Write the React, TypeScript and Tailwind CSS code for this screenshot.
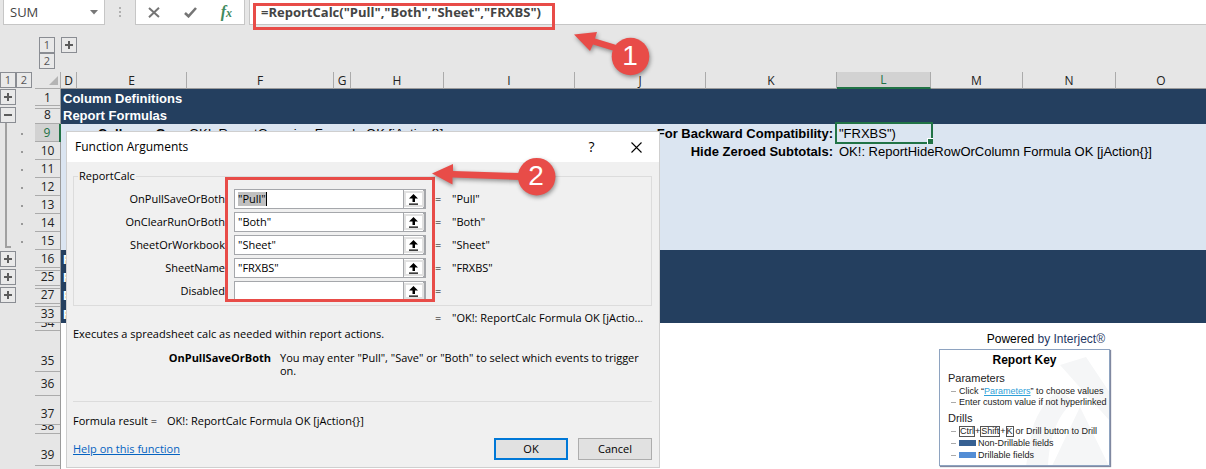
import type { ReactNode } from "react";

const COLUMNS = [
  { id: "D", width: "w-4" },
  { id: "E", width: "w-[110px]" },
  { id: "F", width: "w-[147px]" },
  { id: "G", width: "w-[17px]" },
  { id: "H", width: "w-[93px]" },
  { id: "I", width: "w-[131px]" },
  { id: "J", width: "w-[131px]" },
  { id: "K", width: "w-[131px]" },
  { id: "L", width: "w-[94px]" },
  { id: "M", width: "w-[92px]" },
  { id: "N", width: "w-[93px]" },
  { id: "O", width: "w-[91px]" },
];

type Row = {
  id: string;
  height: string;
  tone: "navy" | "sky" | "white";
  title?: string;
  afterHidden?: boolean;
  align?: string;
  cells?: Record<string, string>;
};

const MIDDLE = "items-center pt-px";
const BOTTOM = "items-end pb-[3px]";
const CLIPPED = "items-end";

const ROWS: Row[] = [
  { id: "1", height: "h-[17px]", tone: "navy", title: "Column Definitions" },
  { id: "8", height: "h-[18px]", tone: "navy", title: "Report Formulas", afterHidden: true },
  {
    id: "9",
    height: "h-[18px]",
    tone: "sky",
    cells: {
      E: "Collapse Grp:",
      F: "OK!: ReportGrouping Formula OK [jAction{}]",
      K: "For Backward Compatibility:",
      L: '"FRXBS")',
    },
  },
  {
    id: "10",
    height: "h-[18px]",
    tone: "sky",
    cells: {
      K: "Hide Zeroed Subtotals:",
      L: "OK!: ReportHideRowOrColumn Formula OK [jAction{}]",
    },
  },
  { id: "11", height: "h-[18px]", tone: "sky" },
  { id: "12", height: "h-[18px]", tone: "sky" },
  { id: "13", height: "h-[18px]", tone: "sky" },
  { id: "14", height: "h-[18px]", tone: "sky" },
  { id: "15", height: "h-[18px]", tone: "sky" },
  { id: "16", height: "h-[18px]", tone: "navy", title: "Formatting" },
  { id: "25", height: "h-[18px]", tone: "navy", title: "Footer", afterHidden: true },
  { id: "27", height: "h-[18px]", tone: "navy", title: "Exports", afterHidden: true },
  { id: "33", height: "h-[19px]", tone: "navy", title: "Ranges", afterHidden: true },
  { id: "34", height: "h-2", tone: "white", align: CLIPPED },
  { id: "35", height: "h-[41px]", tone: "white", align: BOTTOM },
  { id: "36", height: "h-6", tone: "white", align: MIDDLE },
  { id: "37", height: "h-[29px]", tone: "white", align: BOTTOM },
  { id: "38", height: "h-[9px]", tone: "white", align: CLIPPED },
  { id: "39", height: "h-8", tone: "white", align: BOTTOM },
];

const TONES = {
  navy: "bg-[#243f5f] font-bold text-white",
  sky: "bg-[#dbe5f1] text-black",
  white: "bg-white text-black",
};

const ARGUMENTS = [
  { name: "OnPullSaveOrBoth", value: '"Pull"' },
  { name: "OnClearRunOrBoth", value: '"Both"' },
  { name: "SheetOrWorkbook", value: '"Sheet"' },
  { name: "SheetName", value: '"FRXBS"' },
  { name: "Disabled", value: "" },
];

function FormulaBar() {
  return (
    <header className="flex h-[25px] font-['Open_Sans',sans-serif] text-[#444]">
      <div className="ml-[3px] flex w-[102px] items-center justify-between border-x border-b border-[#c6c6c6] bg-white pt-px pr-1.5 pl-1.5">
        <span className="text-[13px]">SUM</span>
        <svg width="8" height="5" viewBox="0 0 8 5" aria-hidden="true">
          <path d="M0 0h8L4 4.5z" fill="#777" />
        </svg>
      </div>
      <svg className="mt-1 w-[30px]" height="16" viewBox="0 0 30 16" fill="#b0b0b0" aria-hidden="true">
        <path d="M14 3h2v2h-2zM14 7h2v2h-2zM14 11h2v2h-2z" />
      </svg>
      <div className="flex w-[110px] items-center justify-around border-x border-b border-[#c6c6c6] bg-white">
        <button aria-label="Cancel entry">
          <svg width="12" height="11" viewBox="0 0 12 11" fill="none" stroke="#757575" strokeWidth="2">
            <path d="M1 1l10 9M11 .8L1 10.2" />
          </svg>
        </button>
        <button aria-label="Enter">
          <svg width="13" height="11" viewBox="0 0 13 11" fill="none" stroke="#757575" strokeWidth="2.6">
            <path d="M1 6l3.500 3.300L12 1" />
          </svg>
        </button>
        <button
          aria-label="Insert function"
          className="font-['Liberation_Serif',serif] text-base leading-4 font-bold text-[#3f8a60] italic"
        >
          f<span className="text-xs">x</span>
        </button>
      </div>
      <input
        aria-label="Formula"
        defaultValue={'=ReportCalc("Pull","Both","Sheet","FRXBS")'}
        className="ml-1 min-w-0 flex-1 border-b border-l border-[#c6c6c6] bg-white pt-px pl-[11px] text-[13px] font-bold text-[#444] outline-none"
      />
    </header>
  );
}

function OutlineButton({ children, label }: { children: ReactNode; label: string }) {
  return (
    <button
      aria-label={label}
      className="flex size-4 shrink-0 items-center justify-center border border-[#8a8d93] bg-[#e9e9e9] font-['Open_Sans',sans-serif] text-[11px] leading-3 text-[#555]"
    >
      {children}
    </button>
  );
}

function Sign({ plus }: { plus?: boolean }) {
  return (
    <svg width="8" height="8" viewBox="0 0 8 8" fill="#5c5c5c" aria-hidden="true">
      <path d={plus ? "M0 3h3V0h2v3h3v2H5v3H3V5H0z" : "M0 3h8v2H0z"} />
    </svg>
  );
}

function RowOutline() {
  return (
    <aside className="flex w-[35px] shrink-0 flex-col">
      <div className="flex">
        <OutlineButton label="Row level 1">1</OutlineButton>
        <OutlineButton label="Row level 2">2</OutlineButton>
      </div>
      <div className="mt-px flex flex-col gap-0.5">
        <OutlineButton label="Expand rows 2 to 7">
          <Sign plus />
        </OutlineButton>
        <OutlineButton label="Collapse rows 9 to 15">
          <Sign />
        </OutlineButton>
      </div>
      <div className="flex h-32 justify-between pr-3 pl-[5px]">
        <div className="mb-[3px] w-1.5 border-b-2 border-l-2 border-[#a0a0a0]" />
        <div className="flex flex-col gap-4 pt-2.5">
          {[9, 10, 11, 12, 13, 14, 15].map((n) => (
            <i key={n} className="size-0.5 bg-[#999]" />
          ))}
        </div>
      </div>
      <div className="flex flex-col gap-0.5">
        {["17 to 24", "26", "28 to 32"].map((rows) => (
          <OutlineButton key={rows} label={`Expand rows ${rows}`}>
            <Sign plus />
          </OutlineButton>
        ))}
      </div>
    </aside>
  );
}

function RowHeading({ row }: { row: Row }) {
  const active = row.id === "9";
  return (
    <th
      scope="row"
      className={`p-0 font-['Open_Sans',sans-serif] text-xs leading-[14px] font-normal ${row.height} ${
        active
          ? "border-r-2 border-[#217346] bg-[#d2d2d2] text-[#217346]"
          : "border-r border-[#9b9b9b] bg-[#e6e6e6] text-[#222]"
      }`}
    >
      <div
        className={`flex justify-center overflow-hidden border-b border-[#ababab] ${row.height} ${row.align ?? MIDDLE} ${
          row.afterHidden ? "shadow-[inset_0_2px_#e6e6e6,inset_0_3px_#ababab]" : ""
        }`}
      >
        {row.id}
      </div>
    </th>
  );
}

function Cell({ row, column }: { row: Row; column: string }) {
  const text = column === "D" ? row.title : row.cells?.[column];
  const heading = column === "E" || column === "K";
  const selected = row.id === "9" && column === "L";
  return (
    <td className={`p-0 ${row.height}`}>
      {text && (
        <div
          className={`relative flex items-center pt-0.5 whitespace-nowrap ${row.height} ${
            heading ? "justify-end pr-1 font-bold" : "pl-0.5"
          } ${selected ? "outline-2 outline-[#217346]" : ""}`}
        >
          {text}
          {selected && (
            <i className="absolute -right-0.5 -bottom-0.5 size-1.5 border-t border-l border-white bg-[#217346]" />
          )}
        </div>
      )}
    </td>
  );
}

function Sheet() {
  return (
    <table className="w-full table-fixed border-separate border-spacing-0 bg-white font-['Liberation_Sans',Arial,sans-serif] text-[13px] leading-4">
      <colgroup>
        <col className="w-[26px]" />
        {COLUMNS.map((c) => (
          <col key={c.id} className={c.width} />
        ))}
      </colgroup>
      <thead className="font-['Open_Sans',sans-serif] text-xs leading-[15px]">
        <tr>
          <th aria-label="Select all" className="h-[17px] border-r border-b border-[#ababab] bg-[#e6e6e6] p-0">
            <svg className="mr-0.5 ml-auto" width="9" height="9" viewBox="0 0 9 9" aria-hidden="true">
              <path d="M9 0v9H0z" fill="#b4b4b4" />
            </svg>
          </th>
          {COLUMNS.map((c) => (
            <th
              key={c.id}
              scope="col"
              className={`h-[17px] border-r p-0 font-normal ${
                c.id === "L"
                  ? "border-b-2 border-r-[#ababab] border-b-[#217346] bg-[#d2d2d2] text-[#217346]"
                  : "border-b border-r-[#ababab] border-b-[#9b9b9b] bg-[#e6e6e6] text-[#222]"
              }`}
            >
              {c.id}
            </th>
          ))}
        </tr>
      </thead>
      <tbody>
        {ROWS.map((row) => (
          <tr key={row.id} className={TONES[row.tone]}>
            <RowHeading row={row} />
            {COLUMNS.map((c) => (
              <Cell key={c.id} row={row} column={c.id} />
            ))}
          </tr>
        ))}
      </tbody>
      <tfoot>
        <tr>
          <td className="h-4 border-r border-[#9b9b9b] bg-[#e6e6e6] p-0" />
          <td colSpan={COLUMNS.length} className="p-0" />
        </tr>
      </tfoot>
    </table>
  );
}

function ArgumentRow({ name, value }: { name: string; value: string }) {
  const focused = name === "OnPullSaveOrBoth";
  return (
    <div className="flex h-5 items-center">
      <label htmlFor={name} className="w-[151px] text-right">
        {name}
      </label>
      <div className="ml-[9px] flex h-5 w-48 border border-[#a5a7ab] bg-white">
        {focused ? (
          <div className="relative flex flex-1 items-center pl-[3px]">
            <span className="border-r border-black bg-[#c0c0c0] leading-[14px] text-transparent" aria-hidden="true">
              {value}
            </span>
            <input id={name} defaultValue={value} className="absolute inset-0 w-full pl-[3px] outline-none" />
          </div>
        ) : (
          <input id={name} defaultValue={value} className="min-w-0 flex-1 pl-[3px] outline-none" />
        )}
        <button
          aria-label={`Select range for ${name}`}
          className="flex w-[22px] items-center justify-center border-r-2 border-l border-[#a5a7ab] bg-white outline-2 -outline-offset-3 outline-[#e1e1e1]"
        >
          <svg width="9" height="11" viewBox="0 0 9 11" aria-hidden="true">
            <path d="M4.500 0L9 4.500H6V8H3.500V4.500H0zM0 9.500h9v1.200H0z" />
          </svg>
        </button>
      </div>
      <span className="ml-[9px] w-[17px]">=</span>
      <output htmlFor={name}>{value}</output>
    </div>
  );
}

function FunctionDialog() {
  return (
    <section
      role="dialog"
      aria-label="Function Arguments"
      className="absolute top-[131px] left-[66px] w-[594px] border border-[#cfcfcf] bg-[#f0f0f0] font-['Open_Sans',sans-serif] text-[11px] leading-[14px] text-black"
    >
      <div className="flex h-[30px] items-center bg-white pl-2">
        <h1 className="flex-1 text-xs">Function Arguments</h1>
        <button aria-label="Help" className="w-[45px] text-sm">
          ?
        </button>
        <button aria-label="Close" className="flex w-[45px] justify-center">
          <svg width="11" height="11" viewBox="0 0 11 11" fill="none" stroke="#000" strokeWidth="1.100">
            <path d="M.5.5l10 10M10.500.5l-10 10" />
          </svg>
        </button>
      </div>
      <div className="pt-[7px] pr-[7px] pb-[7px] pl-1.5">
        <fieldset className="border border-[#dcdcdc] pb-1">
          <legend className="ml-1 px-px">ReportCalc</legend>
          <div className="flex flex-col gap-[3px] pt-1.5">
            {ARGUMENTS.map((a) => (
              <ArgumentRow key={a.name} name={a.name} value={a.value} />
            ))}
          </div>
        </fieldset>
        <div className="mt-[5px] flex">
          <span className="ml-[362px] w-[17px]">=</span>
          <span>"OK!: ReportCalc Formula OK [jActio...</span>
        </div>
        <p className="mt-0.5">Executes a spreadsheet calc as needed within report actions.</p>
        <dl className="mt-2.5 flex h-[50px] leading-[13px]">
          <dt className="w-[198px] text-right font-bold">OnPullSaveOrBoth</dt>
          <dd className="ml-[9px] flex-1">
            You may enter "Pull", "Save" or "Both" to select which events to trigger on.
          </dd>
        </dl>
        <hr className="border-[#dcdcdc]" />
        <p className="mt-3 flex gap-2.5">
          <span>Formula result =</span>
          <span>OK!: ReportCalc Formula OK [jAction{"{}"}]</span>
        </p>
        <div className="mt-2.5 flex items-center gap-2.5">
          <a href="#help" className="mr-auto text-[#0563c1] underline">
            Help on this function
          </a>
          <button className="h-[22px] w-[74px] border-2 border-[#0078d7] bg-[#e1e1e1]">OK</button>
          <button className="h-[22px] w-[74px] border border-[#adadad] bg-[#e1e1e1]">Cancel</button>
        </div>
      </div>
    </section>
  );
}

function Dash() {
  return <i className="mr-[3px] h-px w-[5px] bg-[#aaa]" />;
}

function Key({ children }: { children: ReactNode }) {
  return <kbd className="border border-[#555] font-['Liberation_Sans',sans-serif] leading-[9px]">{children}</kbd>;
}

function ReportKey() {
  return (
    <section className="absolute top-[331px] left-[939px] w-[171px] font-['Liberation_Sans',Arial,sans-serif] text-[#222]">
      <p className="pr-[5px] text-right text-xs leading-4 text-black">
        Powered <span className="text-[#1f3864]">by Interject®</span>
      </p>
      <div className="relative mt-0.5 h-[117px] overflow-hidden border border-[#8ea3c0] bg-white pl-2 text-[9px] leading-3 shadow-[1px_1px_1px_#8088a0]">
        <svg
          className="absolute inset-0"
          width="170"
          height="116"
          viewBox="0 0 170 116"
          fill="#f5f6f7"
          aria-hidden="true"
        >
          <path d="M120 15l26-8 24 36v28zM112 116l28-59 29 59zM92 80c6-20 16-32 28-40l14 12c-14 10-24 30-26 64H86z" />
        </svg>
        <div className="relative">
          <h2 className="mr-2 text-center text-xs leading-5 font-bold text-black">Report Key</h2>
          <h3 className="text-[11px] leading-4">Parameters</h3>
          <p className="flex items-center pl-[3px] leading-[11px]">
            <Dash />
            <span>
              Click “
              <a href="#parameters" className="text-[#2f9fd8] underline">
                Parameters
              </a>
              ” to choose values
            </span>
          </p>
          <p className="flex items-center pl-[3px] leading-[11px]">
            <Dash />
            Enter custom value if not hyperlinked
          </p>
          <h3 className="mt-[3px] text-[11px] leading-[14px]">Drills</h3>
          <p className="flex items-center pl-[3px]">
            <Dash />
            <Key>Ctrl</Key>+<Key>Shift</Key>+<Key>K</Key>
            <span className="ml-0.5">or Drill button to Drill</span>
          </p>
          <p className="flex items-center pl-[3px]">
            <Dash />
            <i className="mr-0.5 h-1.5 w-[17px] bg-[#366092]" />
            Non-Drillable fields
          </p>
          <p className="flex items-center pl-[3px]">
            <Dash />
            <i className="mr-0.5 h-1.5 w-[17px] bg-[#538dd5]" />
            Drillable fields
          </p>
        </div>
      </div>
    </section>
  );
}

function Annotations() {
  return (
    <div className="pointer-events-none font-['Liberation_Sans',Arial,sans-serif] text-[28px] text-white">
      <div className="absolute top-[3px] left-[253px] h-[27px] w-[302px] border-3 border-[#e84c48]" />
      <div className="absolute top-[177px] left-[225px] h-[125px] w-[210px] border-3 border-[#e84c48]" />
      <svg
        className="absolute top-[28px] left-[568px] drop-shadow-[1px_2px_2px_#0006]"
        width="90"
        height="54"
        viewBox="568 28 90 54"
        fill="#e84c48"
        aria-hidden="true"
      >
        <path d="M574 34.500L597 32L595 38.500L618 45.500L616 51.500L593 44.500L590 51z" />
        <circle cx="630.500" cy="56.500" r="18.800" />
      </svg>
      <span className="absolute top-[36px] left-[610px] w-10 text-center leading-10">1</span>
      <svg
        className="absolute top-[152px] left-[426px] drop-shadow-[1px_2px_2px_#0006]"
        width="136"
        height="52"
        viewBox="426 152 136 52"
        fill="#e84c48"
        aria-hidden="true"
      >
        <path d="M432 173.500L453 164V171L520 173V180L452.500 177.500V184.500z" />
        <circle cx="536.700" cy="176.700" r="18.800" />
      </svg>
      <span className="absolute top-[156px] left-[516px] w-10 text-center leading-10">2</span>
    </div>
  );
}

export default function App() {
  return (
    <main className="relative h-screen overflow-hidden bg-[#e6e6e6]">
      <FormulaBar />
      <div className="flex h-[47px] pt-3 pl-[39px]">
        <div className="flex flex-col">
          <OutlineButton label="Column level 1">1</OutlineButton>
          <OutlineButton label="Column level 2">2</OutlineButton>
        </div>
        <div className="ml-1.5">
          <OutlineButton label="Expand columns">
            <Sign plus />
          </OutlineButton>
        </div>
      </div>
      <div className="flex">
        <RowOutline />
        <Sheet />
      </div>
      <ReportKey />
      <FunctionDialog />
      <Annotations />
    </main>
  );
}
